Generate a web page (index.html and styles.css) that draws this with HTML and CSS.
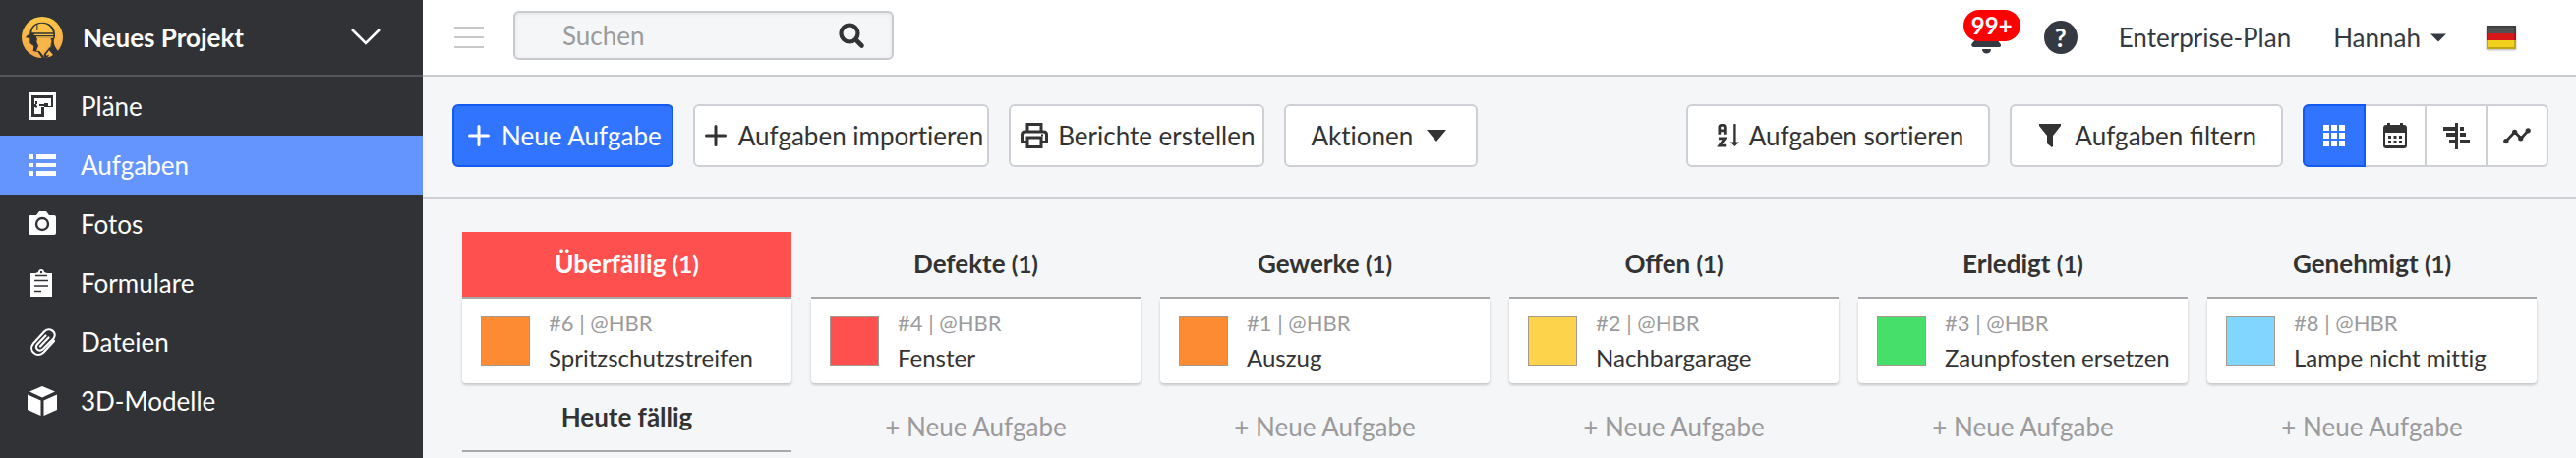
FILE: index.html
```
<!DOCTYPE html>
<html lang="de">

<head>
    <meta charset="UTF-8">
    <meta name="viewport" content="width=device-width, initial-scale=1.0">
    <title>Aufgaben</title>
    <link rel="stylesheet" href="styles.css">
</head>

<body>
    <aside class="sidebar">
        <button class="project" type="button">
            <svg class="logo" viewBox="0 0 126 126">
                <defs>
                    <linearGradient id="gold" x1="0" y1="0" x2="0" y2="1">
                        <stop offset="0" stop-color="#fcc745" />
                        <stop offset="1" stop-color="#f3a54a" />
                    </linearGradient>
                </defs>
                <circle cx="63" cy="63" r="63" fill="url(#gold)" />
                <path d="M12 64c2-6 6-8 13-11 0-22 16-36 37-36 23 0 40 14 40 36v10l-3 5c-2 10 0 17 4 25l9 14-8 9-15-18 3-23-4-10H48l-2 12 5 12-6 15 10 1 11 14v9L62 126l-4-6-8-12-15-3 2-15-12-9V66z" fill="#313235" />
                <path d="M31 49c1-13 6-20 15-25v18h3V23c16-7 41-1 47 26z" fill="#fbc046" />
                <path d="M38 53h59v4H38zM45 61h52v4H45z" fill="#fbc046" />
                <path d="M50 70h30l1 17-7 13-10 10-14-8 6-15-7-9z" fill="#f8b548" />
                <path d="M66 126l3-12 14-17 4-27h5l-2 28 17 14-12 12-8-10-9 11z" fill="#313235" />
                <path d="M84 70h7l-3 24-5 1zM74 116l10-13 12 14-10 5-4-6-5 3z" fill="#f8b548" />
            </svg>
            <span class="project-name">Neues Projekt</span>
            <svg class="chevron" viewBox="0 0 30 18" fill="none" stroke="#fff" stroke-width="2.6">
                <path d="M1 1l14 14L29 1" />
            </svg>
        </button>
        <nav class="nav">
            <a class="nav-item" href="#">
                <svg viewBox="0 0 28 28">
                    <path d="M1 1h26v26H1z" fill="none" stroke="#ccc" stroke-width="1.4" />
                    <path d="M0 0h28v28H0zM3 3v22h13V15h9V3z" fill="#fff" fill-rule="evenodd" />
                    <path d="M6 6h17v8h-3v-3h-4v4h-3v7H6v-7h2v-3H6z" fill="#fff" />
                    <path d="M8 9v3M7 14.500h2M11 13h6" stroke="#313235" stroke-width="2" />
                </svg>
                Pläne
            </a>
            <a class="nav-item active" href="#">
                <svg viewBox="0 0 28 28" fill="#fff">
                    <path d="M0 3h5v5H0zM8 3h20v5H8zM0 12h5v4H0zM8 12h20v4H8zM0 20h5v5H0zM8 20h20v5H8z" />
                </svg>
                Aufgaben
            </a>
            <a class="nav-item" href="#">
                <svg viewBox="0 0 28 28">
                    <path d="M2 5h6l3-4h7l3 4h5q2 0 2 2v16q0 2-2 2H2q-2 0-2-2V7q0-2 2-2z" fill="#fff" />
                    <circle cx="14" cy="14" r="6" fill="#fff" stroke="#313235" stroke-width="2.4" />
                </svg>
                Fotos
            </a>
            <a class="nav-item" href="#">
                <svg viewBox="0 0 28 28">
                    <path d="M2 4h5l3-1c0-4 6-4 6 0l3 1h5v24H2z" fill="#fff" />
                    <path d="M7 6.500h12M6 11.500h14M6 17h14M6 22.500h7" stroke="#313235" stroke-width="1.6" />
                    <circle cx="13" cy="3" r="1.200" fill="#313235" />
                </svg>
                Formulare
            </a>
            <a class="nav-item" href="#">
                <svg viewBox="0 0 28 28" fill="none" stroke="#fff" stroke-width="2.2" stroke-linecap="round">
                    <path d="M26 13L15.500 24.500C9 31-1 23 5 15.500L16 3.500C21-2 30 4 25.500 10.500L15 21C11 25 5.500 20.500 9 16.500L17.500 7.500M20.500 9.500L12 18.500" />
                </svg>
                Dateien
            </a>
            <a class="nav-item" href="#">
                <svg viewBox="0 0 28 28" fill="#fff">
                    <path d="M14-1L27 4.500 14 10.500 1 4.500zM-1 7.500L12.500 13.500V29L-1 23zM29 7.500L15.500 13.500V29L29 23z" />
                </svg>
                3D-Modelle
            </a>
        </nav>
    </aside>

    <div class="page">
        <header class="topbar">
            <button class="menu" type="button" aria-label="Menü">
                <svg viewBox="0 0 30 22" stroke="#c8c8cb" stroke-width="2">
                    <path d="M0 1h30M0 11h30M0 21h30" />
                </svg>
            </button>
            <form class="search">
                <input class="search-input" type="search" placeholder="Suchen" aria-label="Suchen">
                <button class="search-btn" type="submit" aria-label="Suche starten">
                    <svg viewBox="0 0 26 26" fill="none" stroke="#333" stroke-linecap="round">
                        <circle cx="11" cy="11" r="8.500" stroke-width="4.200" />
                        <path d="M18 18l5.500 5.500" stroke-width="4.600" />
                    </svg>
                </button>
            </form>
            <div class="user-area">
                <button class="bell" type="button" aria-label="Mitteilungen">
                    <svg viewBox="0 0 30 34" fill="#343942">
                        <path d="M15 0c-6 0-10 5-10 11v7l-4 5c-2 2 0 4 1 4h26c2 0 3-2 1-4l-4-5v-7c0-6-4-11-10-11zM11 29h9c0 6-9 6-9 0z" />
                    </svg>
                    <span class="badge">99+</span>
                </button>
                <button class="help" type="button" aria-label="Hilfe">?</button>
                <a class="top-link plan" href="#">Enterprise-Plan</a>
                <button class="top-link user" type="button">
                    Hannah
                    <svg viewBox="0 0 16 8" fill="#343942"><path d="M0 0h16L8 8z" /></svg>
                </button>
                <button class="flag" type="button" aria-label="Deutsch">
                    <svg viewBox="0 0 30 24">
                        <path d="M0 0h30v8H0z" fill="#505050" />
                        <path d="M0 8h30v7H0z" fill="#d81818" />
                        <path d="M0 15h30v9H0z" fill="#f2d01e" />
                        <path d="M1 1h28v22H1z" fill="none" stroke="#000" stroke-opacity=".2" stroke-width="2" />
                    </svg>
                </button>
            </div>
        </header>

        <div class="toolbar">
            <button class="btn btn-primary" type="button">
                <svg viewBox="0 0 22 22" stroke="currentColor" stroke-width="3" stroke-linecap="round"><path d="M11 1.500v19M1.500 11h19" /></svg>
                Neue Aufgabe
            </button>
            <button class="btn btn-tight" type="button">
                <svg viewBox="0 0 22 22" stroke="currentColor" stroke-width="3" stroke-linecap="round"><path d="M11 1.500v19M1.500 11h19" /></svg>
                Aufgaben importieren
            </button>
            <button class="btn btn-print" type="button">
                <svg viewBox="0 0 28 26" fill="none" stroke="currentColor" stroke-width="3">
                    <path d="M7 8V1.500h14V8M7 19.500H1.500V12q0-3 3-3h19q3 0 3 3v7.500H21" />
                    <path d="M7 15h14v9.500H7z" />
                    <path d="M21 12.500h2" stroke-width="2" />
                </svg>
                Berichte erstellen
            </button>
            <button class="btn btn-menu" type="button">
                Aktionen
                <svg class="caret" viewBox="0 0 20 12" fill="currentColor"><path d="M0 0h20L10 12z" /></svg>
            </button>

            <div class="toolbar-right">
                <button class="btn btn-sort" type="button">
                    <svg viewBox="0 0 24 26" fill="none" stroke="currentColor" stroke-width="3">
                        <path d="M2 11.500V4q0-2.500 2-2.500h2q2 0 2 2.500v7.500M2 7.500h6M1 16h7L2 24h7" />
                        <path d="M19 0v23" stroke-width="2.600" />
                        <path d="M14 20h10l-5 5z" fill="currentColor" stroke="none" />
                    </svg>
                    Aufgaben sortieren
                </button>
                <button class="btn btn-filter" type="button">
                    <svg viewBox="0 0 22 26" fill="currentColor"><path d="M0 1h22v2l-8 10v11l-1 1-5-4v-8L0 3z" /></svg>
                    Aufgaben filtern
                </button>
                <div class="views">
                    <button class="view active" type="button" aria-label="Kacheln">
                        <svg viewBox="0 0 28 28" fill="currentColor">
                            <path d="M3 3h6v6H3zM11 3h6v6h-6zM19 3h6v6h-6zM3 11h6v6H3zM11 11h6v6h-6zM19 11h6v6h-6zM3 19h6v6H3zM11 19h6v6h-6zM19 19h6v6h-6z" />
                        </svg>
                    </button>
                    <button class="view" type="button" aria-label="Kalender">
                        <svg viewBox="0 0 28 28">
                            <path d="M5 3h1V1h3v2h10V1h3v2h1q3 0 3 3v18q0 3-3 3H5q-3 0-3-3V6q0-3 3-3z" fill="currentColor" />
                            <path d="M4 11h20v13H4z" fill="#fff" />
                            <path d="M7 14h3v3H7zM12.500 14h3v3h-3zM18 14h3v3h-3zM7 19h3v3H7zM12.500 19h3v3h-3zM18 19h3v3h-3z" fill="currentColor" />
                        </svg>
                    </button>
                    <button class="view" type="button" aria-label="Zeitplan">
                        <svg viewBox="0 0 28 28" fill="currentColor">
                            <path d="M13 1h3v27h-3zM1 5h12v4H1zM18 5h4v4h-4zM4 11h9v4H4zM18 11h6v4h-6zM7 18h6v4H7zM18 18h10v4H18z" />
                        </svg>
                    </button>
                    <button class="view" type="button" aria-label="Diagramm">
                        <svg viewBox="0 0 30 28">
                            <path d="M3 20l9.500-10 7 7 8-9" fill="none" stroke="currentColor" stroke-width="3" />
                            <g fill="currentColor">
                                <circle cx="3" cy="20" r="2.800" />
                                <circle cx="12.500" cy="10" r="2.800" />
                                <circle cx="19" cy="17" r="2.800" />
                                <circle cx="27" cy="8.500" r="2.800" />
                            </g>
                        </svg>
                    </button>
                </div>
            </div>
        </div>

        <main class="board">
            <section class="column">
                <h2 class="column-title overdue">Überfällig <small>(1)</small></h2>
                <article class="card">
                    <span class="swatch orange"></span>
                    <div class="card-text">
                        <p class="card-id">#6 | @HBR</p>
                        <p class="card-name">Spritzschutzstreifen</p>
                    </div>
                </article>
                <h2 class="column-title">Heute fällig</h2>
            </section>
            <section class="column">
                <h2 class="column-title">Defekte <small>(1)</small></h2>
                <article class="card">
                    <span class="swatch red"></span>
                    <div class="card-text">
                        <p class="card-id">#4 | @HBR</p>
                        <p class="card-name">Fenster</p>
                    </div>
                </article>
                <button class="add-task" type="button">+ Neue Aufgabe</button>
            </section>
            <section class="column">
                <h2 class="column-title">Gewerke <small>(1)</small></h2>
                <article class="card">
                    <span class="swatch orange"></span>
                    <div class="card-text">
                        <p class="card-id">#1 | @HBR</p>
                        <p class="card-name">Auszug</p>
                    </div>
                </article>
                <button class="add-task" type="button">+ Neue Aufgabe</button>
            </section>
            <section class="column">
                <h2 class="column-title">Offen <small>(1)</small></h2>
                <article class="card">
                    <span class="swatch yellow"></span>
                    <div class="card-text">
                        <p class="card-id">#2 | @HBR</p>
                        <p class="card-name">Nachbargarage</p>
                    </div>
                </article>
                <button class="add-task" type="button">+ Neue Aufgabe</button>
            </section>
            <section class="column">
                <h2 class="column-title">Erledigt <small>(1)</small></h2>
                <article class="card">
                    <span class="swatch green"></span>
                    <div class="card-text">
                        <p class="card-id">#3 | @HBR</p>
                        <p class="card-name">Zaunpfosten ersetzen</p>
                    </div>
                </article>
                <button class="add-task" type="button">+ Neue Aufgabe</button>
            </section>
            <section class="column">
                <h2 class="column-title">Genehmigt <small>(1)</small></h2>
                <article class="card">
                    <span class="swatch blue"></span>
                    <div class="card-text">
                        <p class="card-id">#8 | @HBR</p>
                        <p class="card-name">Lampe nicht mittig</p>
                    </div>
                </article>
                <button class="add-task" type="button">+ Neue Aufgabe</button>
            </section>
        </main>
    </div>
</body>

</html>
```
FILE: styles.css
```
* {
    box-sizing: border-box;
}

body {
    display: flex;
    min-height: 100vh;
    margin: 0;
    font-family: Lato, "Liberation Sans", sans-serif;
    font-size: 26px;
    line-height: 32px;
    color: #333;
    background: #f5f6f8;
}

button,
input {
    margin: 0;
    padding: 0;
    border: 0;
    font: inherit;
    color: inherit;
    background: none;
}

button {
    cursor: pointer;
}

a {
    color: inherit;
    text-decoration: none;
}

svg {
    display: block;
    flex: none;
    overflow: visible;
}

/* sidebar */
.sidebar {
    flex: 0 0 430px;
    color: #fff;
    background: #313235;
}

.project {
    display: flex;
    align-items: center;
    width: 100%;
    height: 78px;
    padding: 0 43px 0 22px;
    border-bottom: 2px solid #55565a;
    font-weight: bold;
    text-align: left;
}

.logo {
    width: 42px;
    height: 42px;
    margin-right: 20px;
}

.project-name {
    flex: 1;
}

.chevron {
    width: 30px;
    height: 18px;
}

.nav-item {
    display: flex;
    align-items: center;
    gap: 25px;
    height: 60px;
    padding-left: 29px;
}

.nav-item svg {
    width: 28px;
    height: 28px;
}

.nav-item.active {
    background: #6495ff;
}

/* top bar */
.page {
    flex: 1;
    min-width: 0;
}

.topbar {
    display: flex;
    align-items: center;
    height: 78px;
    padding: 0 61px 0 32px;
    border-bottom: 2px solid #c9cacd;
    color: #343942;
    background: #fff;
}

.menu svg {
    width: 30px;
    height: 22px;
}

.search {
    display: flex;
    align-items: center;
    width: 387px;
    height: 50px;
    margin-left: 30px;
    margin-bottom: 4px;
    padding-right: 28px;
    border: 2px solid #c9cacd;
    border-radius: 6px;
    background: #f5f6f8;
    box-shadow: inset 0 1px 4px rgba(0, 0, 0, .08);
}

.search-input {
    flex: 1;
    min-width: 0;
    height: 100%;
    padding-left: 48px;
    outline: 0;
}

.search-input::placeholder {
    color: #9b9b9d;
    opacity: 1;
}

.search-btn svg {
    width: 26px;
    height: 26px;
}

.user-area {
    display: flex;
    align-items: center;
    margin-left: auto;
}

.bell {
    position: relative;
    width: 30px;
    margin-right: 44px;
}

.bell svg {
    width: 30px;
    height: 34px;
}

.badge {
    position: absolute;
    left: -8px;
    bottom: 13px;
    width: 58px;
    height: 32px;
    border-radius: 16px;
    font-size: 24px;
    font-weight: bold;
    color: #fff;
    background: #f00;
}

.help {
    width: 34px;
    height: 34px;
    margin-right: 42px;
    border-radius: 50%;
    font-weight: bold;
    color: #fff;
    background: #343942;
}

.plan {
    margin-right: 43px;
}

.user {
    display: flex;
    align-items: center;
    gap: 10px;
    margin-right: 41px;
}

.user svg {
    width: 16px;
    height: 9px;
}

.flag svg {
    width: 30px;
    height: 24px;
    filter: drop-shadow(0 1px 1px rgba(0, 0, 0, .3));
}

/* toolbar */
.toolbar {
    display: flex;
    align-items: center;
    gap: 20px;
    height: 124px;
    padding: 0 28px 2px 30px;
    border-bottom: 2px solid #cfd0d5;
}

.toolbar-right {
    display: flex;
    gap: 20px;
    margin-left: auto;
}

.btn {
    display: flex;
    align-items: center;
    gap: 12px;
    height: 64px;
    padding: 0 10px 0 14px;
    border: 2px solid #cfd0d5;
    border-radius: 6px;
    font-variant-ligatures: none;
    white-space: nowrap;
    background: #fff;
}

.btn svg {
    width: 22px;
    height: 26px;
}

.btn .caret {
    width: 20px;
    height: 12px;
}

.btn-primary {
    border-color: #1459f0;
    color: #fff;
    background: #3174ff;
}

.btn-tight {
    padding: 0 4px 0 10px;
}

.btn-print {
    gap: 10px;
    padding: 0 8px 0 10px;
}

.btn-print svg {
    width: 28px;
}

.btn-menu {
    gap: 14px;
    padding: 0 30px 0 25px;
}

.btn-sort {
    gap: 10px;
    padding: 0 25px 0 30px;
}

.btn-filter {
    gap: 14px;
    padding: 0 25px 0 28px;
    font-variant-ligatures: normal;
}

.views {
    display: flex;
    border: 2px solid #cfd0d5;
    border-radius: 6px;
    background: #fff;
}

.view {
    display: flex;
    align-items: center;
    justify-content: center;
    width: 62px;
    height: 60px;
    border-left: 2px solid #cfd0d5;
}

.view svg {
    width: 28px;
    height: 28px;
}

.view.active {
    width: 64px;
    height: 64px;
    margin: -2px 0 -2px -2px;
    border: 2px solid #1459f0;
    border-radius: 6px 0 0 6px;
    color: #fff;
    background: #3174ff;
}

.view.active + .view {
    width: 60px;
    border-left: 0;
}

/* board */
.board {
    display: grid;
    grid-template-columns: repeat(6, 1fr);
    gap: 20px;
    padding: 34px 40px 0;
}

.column {
    min-width: 0;
}

.column-title {
    height: 68px;
    margin: 0;
    border-bottom: 2px solid #a9a9ab;
    font-size: 26px;
    line-height: 64px;
    text-align: center;
}

.column-title small {
    font-size: 24px;
}

.column-title.overdue {
    color: #fff;
    background: #ff5050;
}

.card {
    display: flex;
    align-items: center;
    gap: 19px;
    height: 86px;
    margin-bottom: 2px;
    padding: 0 19px;
    border-radius: 0 0 4px 4px;
    background: #fff;
    box-shadow: 0 2px 3px rgba(0, 0, 0, .2);
}

.swatch {
    flex: none;
    width: 50px;
    height: 50px;
    border: 1px solid #a59a90;
}

.orange {
    background: #fc8b34;
}

.red {
    background: #ff5050;
}

.yellow {
    background: #fdd34b;
}

.green {
    background: #46df69;
}

.blue {
    background: #80d6ff;
}

.card-text {
    padding-bottom: 2px;
}

.card-text p {
    margin: 0;
    line-height: 35px;
    white-space: nowrap;
}

.card-id {
    font-size: 22px;
    color: #9b9b9d;
}

.card-name {
    font-size: 24px;
    font-variant-ligatures: none;
}

.add-task {
    display: block;
    width: 100%;
    height: 56px;
    margin-top: 16px;
    color: #9b9b9d;
}
```
